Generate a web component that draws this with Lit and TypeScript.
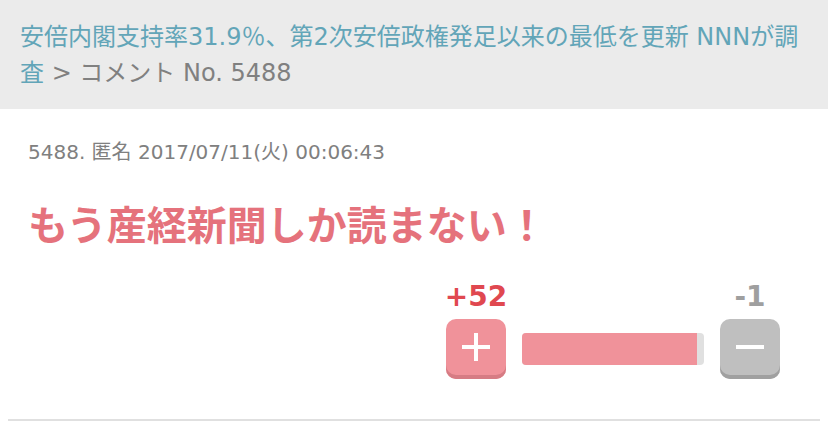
import { LitElement, html, css } from "lit";
import { customElement, property } from "lit/decorators.js";

@customElement("vote-panel")
class VotePanel extends LitElement {
  @property({ type: Number }) up = 0;
  @property({ type: Number }) down = 0;
  @property({ type: Number }) share = 0;

  static styles = css`
    :host {
      display: flex;
      justify-content: flex-end;
      align-items: flex-end;
      gap: 16px;
    }
    .side {
      display: flex;
      flex-direction: column;
      align-items: center;
      width: 60px;
    }
    .count {
      font-size: 28px;
      line-height: 44px;
      font-weight: bold;
      white-space: nowrap;
    }
    .up .count {
      color: #e04850;
    }
    .down .count {
      color: #9f9f9f;
    }
    button {
      display: flex;
      justify-content: center;
      width: 60px;
      height: 60px;
      padding: 0;
      border: 0;
      border-radius: 10px;
      cursor: pointer;
    }
    .up button {
      background: #f0929a;
      box-shadow: inset 0 -4px #d67c84;
    }
    .down button {
      background: #bfbfbf;
      box-shadow: inset 0 -4px #a0a0a0;
    }
    svg {
      display: block;
      width: 60px;
      height: 60px;
      fill: #fff;
    }
    .track {
      width: 182px;
      height: 32px;
      margin-bottom: 14px;
      border-radius: 4px;
      background: #e0e0e0;
      overflow: hidden;
    }
    .fill {
      height: 100%;
      background: #f0929a;
    }
  `;

  render() {
    return html`
      <div class="side up">
        <span class="count">+${this.up}</span>
        <button type="button" aria-label="プラス" @click=${() => this.up++}>
          <svg viewBox="0 0 60 60" aria-hidden="true">
            <path d="M28 14h4v12h12v4H32v12h-4V30H16v-4h12z" />
          </svg>
        </button>
      </div>
      <div class="track"><div class="fill" style="width:${this.share}%"></div></div>
      <div class="side down">
        <span class="count">-${this.down}</span>
        <button type="button" aria-label="マイナス" @click=${() => this.down++}>
          <svg viewBox="0 0 60 60" aria-hidden="true">
            <path d="M16 26h28v4H16z" />
          </svg>
        </button>
      </div>
    `;
  }
}

@customElement("app-root")
class AppRoot extends LitElement {
  private headline = "安倍内閣支持率31.9\uFF05、第2次安倍政権発足以来の最低を更新 NNNが調査";
  private comment = "もう産経新聞しか読まない\uFF01";

  static styles = css`
    :host {
      display: block;
      font-family: Verdana, "DejaVu Sans", "Noto Sans CJK JP", sans-serif;
      color: #808080;
      background: #fff;
    }
    .crumbs {
      padding: 19px 20px 18px;
      background: #ebebeb;
      font-size: 24px;
      line-height: 36px;
    }
    a {
      color: #62a5b8;
      text-decoration: none;
    }
    .comment {
      margin: 0 8px;
      padding: 23px 40px 40px 20px;
      border-bottom: 2px solid #e0e0e0;
    }
    .meta {
      font-size: 20px;
      line-height: 40px;
    }
    .body {
      margin: 22px 0 17px;
      font-size: 40px;
      line-height: 64px;
      font-weight: bold;
      color: #e5727c;
    }
  `;

  render() {
    return html`
      <nav class="crumbs">
        <a href="#article">${this.headline}</a>
        &gt; コメント No. 5488
      </nav>
      <article class="comment">
        <div class="meta">5488. 匿名 <time datetime="2017-07-11T00:06:43">2017/07/11(火) 00:06:43</time></div>
        <p class="body">${this.comment}</p>
        <vote-panel up="52" down="1" share="96"></vote-panel>
      </article>
    `;
  }
}
